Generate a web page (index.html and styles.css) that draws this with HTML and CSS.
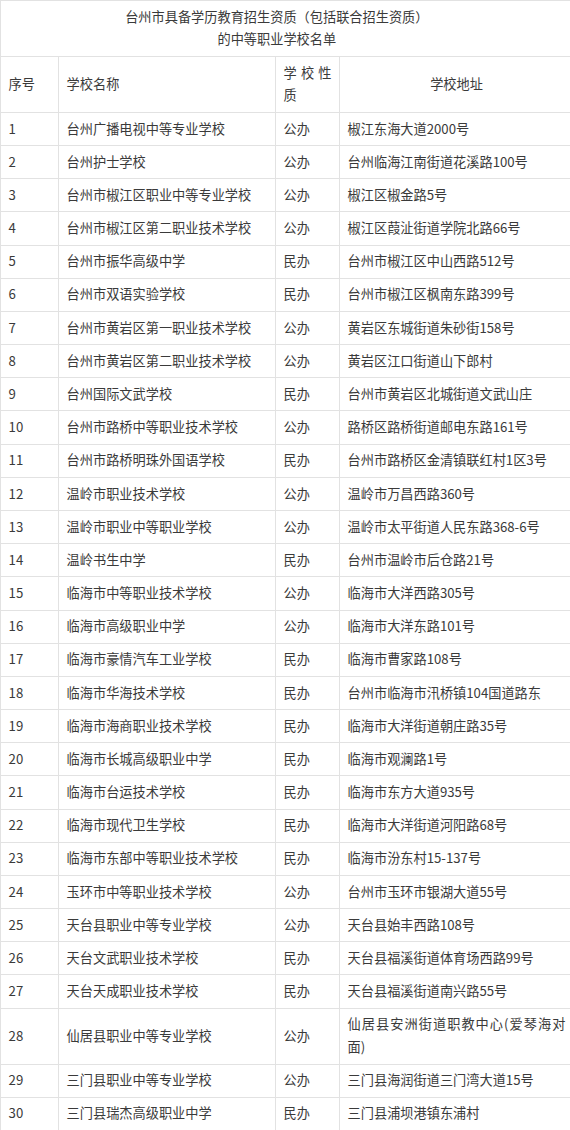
FILE: index.html
```html
<!DOCTYPE html>
<html lang="zh-CN">
<head>
<meta charset="utf-8">
<title>台州市中等职业学校名单</title>
<link rel="stylesheet" href="styles.css">
</head>
<body>
<table class="list">
  <colgroup>
    <col class="c-no">
    <col class="c-name">
    <col class="c-type">
    <col class="c-addr">
  </colgroup>
  <thead>
    <tr><th colspan="4" class="title">台州市具备学历教育招生资质（包括联合招生资质）<br>的中等职业学校名单</th></tr>
    <tr>
      <th>序号</th>
      <th>学校名称</th>
      <th>学校性质</th>
      <th class="center">学校地址</th>
    </tr>
  </thead>
  <tbody>
    <tr><td>1</td><td>台州广播电视中等专业学校</td><td>公办</td><td>椒江东海大道2000号</td></tr>
    <tr><td>2</td><td>台州护士学校</td><td>公办</td><td>台州临海江南街道花溪路100号</td></tr>
    <tr><td>3</td><td>台州市椒江区职业中等专业学校</td><td>公办</td><td>椒江区椒金路5号</td></tr>
    <tr><td>4</td><td>台州市椒江区第二职业技术学校</td><td>公办</td><td>椒江区葭沚街道学院北路66号</td></tr>
    <tr><td>5</td><td>台州市振华高级中学</td><td>民办</td><td>台州市椒江区中山西路512号</td></tr>
    <tr><td>6</td><td>台州市双语实验学校</td><td>民办</td><td>台州市椒江区枫南东路399号</td></tr>
    <tr><td>7</td><td>台州市黄岩区第一职业技术学校</td><td>公办</td><td>黄岩区东城街道朱砂街158号</td></tr>
    <tr><td>8</td><td>台州市黄岩区第二职业技术学校</td><td>公办</td><td>黄岩区江口街道山下郎村</td></tr>
    <tr><td>9</td><td>台州国际文武学校</td><td>民办</td><td>台州市黄岩区北城街道文武山庄</td></tr>
    <tr><td>10</td><td>台州市路桥中等职业技术学校</td><td>公办</td><td>路桥区路桥街道邮电东路161号</td></tr>
    <tr><td>11</td><td>台州市路桥明珠外国语学校</td><td>民办</td><td>台州市路桥区金清镇联红村1区3号</td></tr>
    <tr><td>12</td><td>温岭市职业技术学校</td><td>公办</td><td>温岭市万昌西路360号</td></tr>
    <tr><td>13</td><td>温岭市职业中等职业学校</td><td>公办</td><td>温岭市太平街道人民东路368-6号</td></tr>
    <tr><td>14</td><td>温岭书生中学</td><td>民办</td><td>台州市温岭市后仓路21号</td></tr>
    <tr><td>15</td><td>临海市中等职业技术学校</td><td>公办</td><td>临海市大洋西路305号</td></tr>
    <tr><td>16</td><td>临海市高级职业中学</td><td>公办</td><td>临海市大洋东路101号</td></tr>
    <tr><td>17</td><td>临海市豪情汽车工业学校</td><td>民办</td><td>临海市曹家路108号</td></tr>
    <tr><td>18</td><td>临海市华海技术学校</td><td>民办</td><td>台州市临海市汛桥镇104国道路东</td></tr>
    <tr><td>19</td><td>临海市海商职业技术学校</td><td>民办</td><td>临海市大洋街道朝庄路35号</td></tr>
    <tr><td>20</td><td>临海市长城高级职业中学</td><td>民办</td><td>临海市观澜路1号</td></tr>
    <tr><td>21</td><td>临海市台运技术学校</td><td>民办</td><td>临海市东方大道935号</td></tr>
    <tr><td>22</td><td>临海市现代卫生学校</td><td>民办</td><td>临海市大洋街道河阳路68号</td></tr>
    <tr><td>23</td><td>临海市东部中等职业技术学校</td><td>民办</td><td>临海市汾东村15-137号</td></tr>
    <tr><td>24</td><td>玉环市中等职业技术学校</td><td>公办</td><td>台州市玉环市银湖大道55号</td></tr>
    <tr><td>25</td><td>天台县职业中等专业学校</td><td>公办</td><td>天台县始丰西路108号</td></tr>
    <tr><td>26</td><td>天台文武职业技术学校</td><td>民办</td><td>天台县福溪街道体育场西路99号</td></tr>
    <tr><td>27</td><td>天台天成职业技术学校</td><td>民办</td><td>天台县福溪街道南兴路55号</td></tr>
    <tr><td>28</td><td>仙居县职业中等专业学校</td><td>公办</td><td>仙居县安洲街道职教中心(爱琴海对面)</td></tr>
    <tr><td>29</td><td>三门县职业中等专业学校</td><td>公办</td><td>三门县海润街道三门湾大道15号</td></tr>
    <tr><td>30</td><td>三门县瑞杰高级职业中学</td><td>民办</td><td>三门县浦坝港镇东浦村</td></tr>
  </tbody>
</table>
</body>
</html>
```

FILE: styles.css
```css
html, body {
  margin: 0;
  padding: 0;
  background: #ffffff;
}

body {
  font-family: "Noto Sans CJK SC", "Noto Sans", sans-serif;
  font-size: 13.2px;
  line-height: 22.8px;
  color: #3a3a3a;
  overflow: hidden;
}

.list {
  border-collapse: collapse;
  table-layout: fixed;
  width: 573px;
}

.c-no { width: 58px; }
.c-name { width: 217px; }
.c-type { width: 64px; }
.c-addr { width: 234px; }

.list th,
.list td {
  border: 1px solid #e2e2e2;
  padding: 4.7px 7.6px;
  font-weight: normal;
  text-align: justify;
  vertical-align: middle;
  word-break: break-all;
}

.list th.title {
  text-align: center;
  padding-right: 28px;
}

.list th.center {
  text-align: center;
}
```
